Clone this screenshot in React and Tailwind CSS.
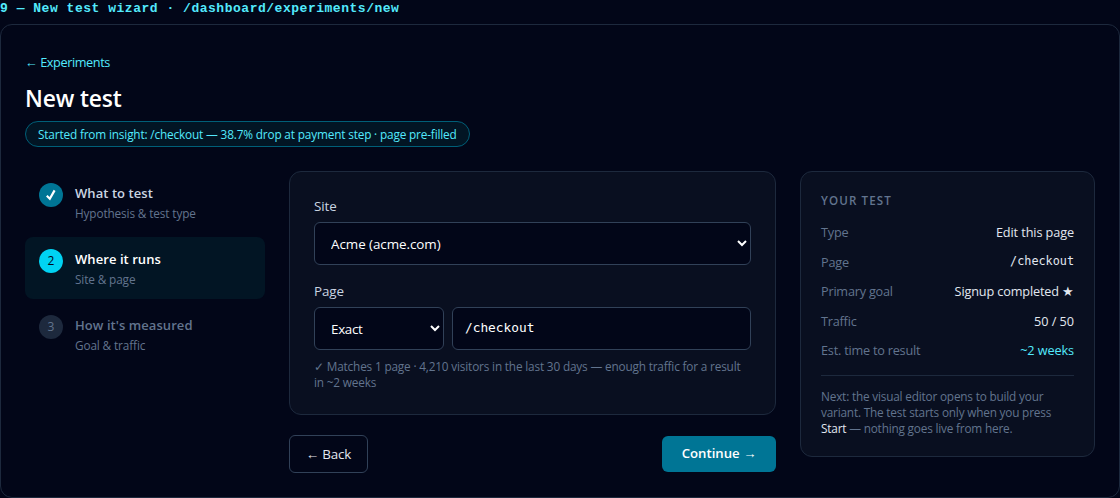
import React from "react";

const steps = [
  { id: 1, title: "What to test", hint: "Hypothesis & test type", state: "done" },
  { id: 2, title: "Where it runs", hint: "Site & page", state: "active" },
  { id: 3, title: "How it's measured", hint: "Goal & traffic", state: "todo" },
];

const circleStyles = {
  done: "bg-[#007595] text-white",
  active: "bg-[#00d3f3] text-[#020618]",
  todo: "bg-[#1d293d] text-[#62748e]",
};

const titleStyles = {
  done: "text-[#cad5e2]",
  active: "text-white",
  todo: "text-[#62748e]",
};

const summary = [
  { label: "Type", value: "Edit this page", style: "text-[#e2e8f0] tracking-[-0.1px]" },
  { label: "Page", value: "/checkout", style: "text-[#e2e8f0] font-['DejaVu_Sans_Mono',monospace] text-[11.8px] tracking-normal" },
  { label: "Primary goal", value: "Signup completed ★", style: "text-[#e2e8f0] tracking-[-0.14px]" },
  { label: "Traffic", value: "50 / 50", style: "text-[#e2e8f0] tracking-[-0.05px]" },
  { label: "Est. time to result", value: "~2 weeks", style: "text-[#53eafd] tracking-[-0.1px]" },
];

const Steps = () => (
  <ol className="flex flex-col gap-1">
    {steps.map((step) => (
      <li
        key={step.id}
        className={`flex h-[62px] gap-3 rounded-lg px-3.5 pt-3 ${step.state === "active" ? "bg-[#021524]" : ""}`}
      >
        <span
          className={`flex size-6 shrink-0 items-center justify-center rounded-full text-[12px] ${circleStyles[step.state]}`}
        >
          {step.state === "done" ? (
            <svg viewBox="0 0 12 12" className="size-3" fill="none" stroke="currentColor" strokeWidth="2.2">
              <path d="M1.8 6.8 L4.8 9.8 L9.6 1.4" />
            </svg>
          ) : (
            step.id
          )}
        </span>
        <div>
          <p className={`text-[13px] leading-5 font-semibold tracking-[0.06px] ${titleStyles[step.state]}`}>
            {step.title}
          </p>
          <p className="pt-px text-[11.8px] leading-[18px] tracking-[-0.13px] text-[#62748e]">{step.hint}</p>
        </div>
      </li>
    ))}
  </ol>
);

const PageForm = () => (
  <div>
    <div className="h-[244px] rounded-xl border border-[#1d293d] bg-[#090f20] px-6 pt-6">
      <label className="block pb-[5px] text-[13.4px] leading-[21px] tracking-[-0.1px] text-[#cad5e2]">Site</label>
      <select className="block h-[43px] w-full rounded-md border border-[#314158] bg-[#020618] px-3 text-[13.4px] tracking-[-0.05px] text-white">
        <option>Acme (acme.com)</option>
      </select>
      <label className="block pt-4 pb-[5px] text-[13.4px] leading-[21px] tracking-[-0.1px] text-[#cad5e2]">Page</label>
      <div className="flex gap-2">
        <select className="h-[43px] w-[130px] rounded-md border border-[#314158] bg-[#020618] px-3 text-[13.4px] tracking-[-0.3px] text-white">
          <option>Exact</option>
        </select>
        <input
          className="h-[43px] min-w-0 flex-1 rounded-md border border-[#314158] bg-[#020618] px-3 pb-0.5 font-['DejaVu_Sans_Mono',monospace] text-[12.8px] text-white"
          defaultValue="/checkout"
        />
      </div>
      <p className="mt-2 text-[11.8px] leading-4 tracking-[-0.17px] whitespace-nowrap text-[#62748e]">
        ✓ Matches 1 page · 4,210 visitors in the last 30 days — enough traffic for a result
        <br />
        in ~2 weeks
      </p>
    </div>
    <div className="mt-5 flex items-center justify-between">
      <button className="h-[38px] w-[79px] rounded-md border border-[#314158] text-[13.4px] tracking-[-0.15px] text-[#e2e8f0]">
        ← Back
      </button>
      <button className="h-9 w-[114px] rounded-md bg-[#007595] text-[13.2px] font-semibold text-white">
        Continue →
      </button>
    </div>
  </div>
);

const Summary = () => (
  <aside className="h-[286px] rounded-xl border border-[#1d293d] bg-[#090f20] px-5 pt-5">
    <h2 className="text-[11.6px] leading-[18px] font-semibold tracking-[1.1px] text-[#62748e]">YOUR TEST</h2>
    <dl className="mt-2">
      {summary.map((row) => (
        <div key={row.label} className="flex h-[29.5px] items-center justify-between text-[12.7px]">
          <dt className="tracking-[-0.22px] text-[#62748e]">{row.label}</dt>
          <dd className={row.style}>{row.value}</dd>
        </div>
      ))}
    </dl>
    <p className="mt-[9px] border-t border-[#1d293d] pt-3 text-[11.8px] leading-4 tracking-[-0.19px] whitespace-nowrap text-[#62748e]">
      Next: the visual editor opens to build your
      <br />
      variant. The test starts only when you press
      <br />
      <span className="text-[#e2e8f0]">Start</span> — nothing goes live from here.
    </p>
  </aside>
);

const App = () => {
  return (
    <div className="h-[498px] bg-[#020618] font-['Open_Sans',sans-serif]">
      <p className="h-6 pt-px font-['Liberation_Mono',monospace] text-[13px] leading-4 font-bold tracking-[0.52px] text-[#53eafd]">
        9 — New test wizard · /dashboard/experiments/new
      </p>
      <main className="h-[474px] rounded-xl border border-[#1d293d] px-6 pt-[27px]">
        <a className="block text-[12.7px] leading-5 tracking-[-0.4px] text-[#53eafd]">← Experiments</a>
        <h1 className="mt-[11px] text-[22.8px] leading-8 font-semibold tracking-[-0.15px] text-white">New test</h1>
        <div className="mt-1.5 flex h-[26px] w-[445px] items-center rounded-full border border-[#005f78] bg-[#021524] px-3 pt-px text-[11.8px] tracking-[-0.16px] whitespace-nowrap text-[#53eafd]">
          Started from insight: /checkout — 38.7% drop at payment step · page pre-filled
        </div>
        <div className="mt-6 grid grid-cols-[240px_1fr_295px] items-start gap-6">
          <Steps />
          <PageForm />
          <Summary />
        </div>
      </main>
    </div>
  );
};

export default App;
